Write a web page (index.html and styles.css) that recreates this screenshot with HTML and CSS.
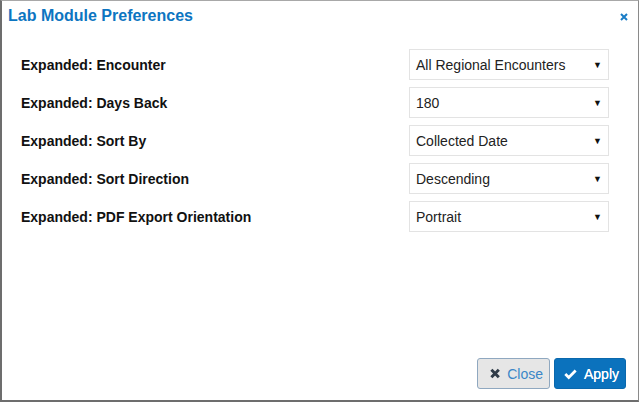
FILE: index.html
```html
<!DOCTYPE html>
<html>
<head>
<meta charset="utf-8">
<link rel="stylesheet" href="styles.css">
</head>
<body>
<div class="dialog">
  <div class="header">
    <div class="title">Lab Module Preferences</div>
    <svg class="x-icon" width="8" height="8" viewBox="0 0 8 8"><path d="M1 1L7 7M7 1L1 7" stroke="#1a7dc6" stroke-width="2"/></svg>
  </div>
  <div class="body">
    <div class="row"><div class="label">Expanded: Encounter</div><div class="select"><span>All Regional Encounters</span><span class="arrow">▼</span></div></div>
    <div class="row"><div class="label">Expanded: Days Back</div><div class="select"><span>180</span><span class="arrow">▼</span></div></div>
    <div class="row"><div class="label">Expanded: Sort By</div><div class="select"><span>Collected Date</span><span class="arrow">▼</span></div></div>
    <div class="row"><div class="label">Expanded: Sort Direction</div><div class="select"><span>Descending</span><span class="arrow">▼</span></div></div>
    <div class="row"><div class="label">Expanded: PDF Export Orientation</div><div class="select"><span>Portrait</span><span class="arrow">▼</span></div></div>
  </div>
  <div class="footer">
    <button class="btn btn-close"><svg width="11" height="11" viewBox="0 0 11 11"><path d="M1.5 1.5L9.5 9.5M9.5 1.5L1.5 9.5" stroke="#2f3b47" stroke-width="3.2"/></svg>Close</button>
    <button class="btn btn-apply"><svg width="15" height="12" viewBox="0 0 15 12"><path d="M1.5 6L5.5 10L13.5 2" fill="none" stroke="#fff" stroke-width="3.2"/></svg>Apply</button>
  </div>
</div>
</body>
</html>
```
FILE: styles.css
```css
html, body { margin: 0; padding: 0; background: #fff; }
body { font-family: "Liberation Sans", Arial, sans-serif; width: 639px; height: 403px; overflow: hidden; }
.dialog {
  box-sizing: border-box;
  width: 639px;
  height: 402px;
  border-top: 1px solid #a8a8a8;
  border-left: 2px solid #6d6d6d;
  border-right: 1px solid #8a8a8a;
  border-bottom: 2px solid #6d6d6d;
  display: flex;
  flex-direction: column;
}
.header { display: flex; justify-content: space-between; align-items: flex-start; padding: 5px 10px 0 6px; height: 27px; }
.title { font-size: 16px; font-weight: bold; color: #0c75c1; line-height: 19px; }
.x-icon { margin-top: 7px; }
.body { padding: 16px 29px 0 19px; display: flex; flex-direction: column; gap: 7px; flex: 1; }
.row { display: flex; justify-content: space-between; align-items: center; height: 31px; }
.label { font-size: 14px; font-weight: bold; color: #111; }
.select {
  box-sizing: border-box; width: 200px; height: 31px;
  border: 1px solid #e3e3e3;
  display: flex; justify-content: space-between; align-items: center;
  padding: 0 6px 0 6px;
  font-size: 14px; color: #222;
}
.arrow { font-size: 9px; color: #111; }
.footer { display: flex; justify-content: flex-end; gap: 4px; padding: 0 12px 11px 0; }
.btn {
  box-sizing: border-box; height: 31px; border-radius: 3px;
  font-family: "Liberation Sans", Arial, sans-serif; font-size: 14px;
  display: flex; align-items: center; gap: 6px; padding: 0 6px 0 12px;
}
.btn-close { width: 73px; background: #e6e6e6; border: 1px solid #8fa8c0; color: #3a86c8; gap: 7px; }
.btn-apply { width: 72px; background: #0b72bd; border: 1px solid #0a68ad; color: #fff; padding-left: 9px; gap: 7px; text-shadow: 0 0 0.4px #fff; }
```
